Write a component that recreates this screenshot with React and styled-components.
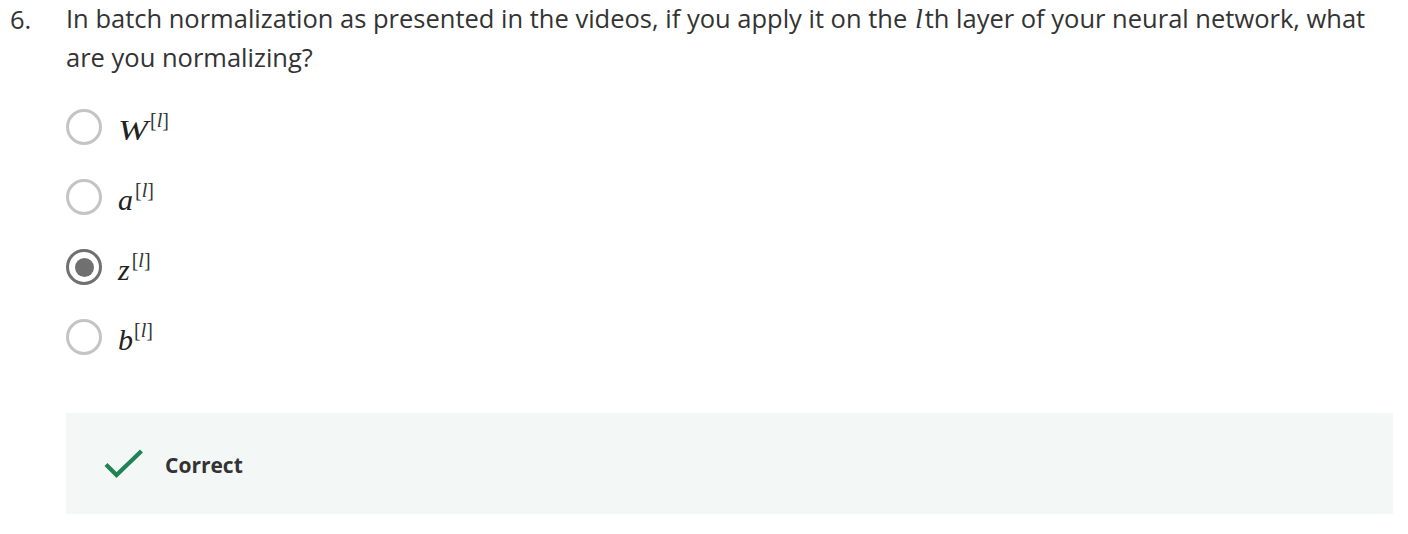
import React from "react";
import styled, { createGlobalStyle } from "styled-components";

const Global = createGlobalStyle`
  html, body { margin: 0; padding: 0; background: #fff; }
  body { font-family: "Open Sans", "Noto Sans", sans-serif; color: #333; }
`;

const Page = styled.div`
  width: 1408px;
  height: 534px;
  box-sizing: border-box;
  padding: 0 15px 0 10px;
`;

const Question = styled.div`
  display: flex;
  align-items: flex-start;
`;

const Num = styled.div`
  width: 56px;
  flex: none;
  font-size: 25.5px;
  line-height: 39px;
  color: #333;
`;

const Body = styled.div`
  flex: 1;
`;

const Prompt = styled.div`
  font-size: 25.5px;
  line-height: 39px;
  color: #333;
  margin-top: -1px;
`;

const Ell = styled.span`
  font-family: "Liberation Serif", "DejaVu Serif", serif;
  font-style: italic;
  font-size: ${(p) => p.$size || 26}px;
  margin: 0 ${(p) => p.$mr ?? 0}px 0 ${(p) => p.$ml ?? 0}px;
`;

const Options = styled.div`
  display: flex;
  flex-direction: column;
  gap: 34px;
  margin-top: 32px;
`;

const Option = styled.label`
  display: flex;
  align-items: center;
  gap: 16px;
  height: 36px;
`;

const Radio = styled.span`
  width: 36px;
  height: 36px;
  box-sizing: border-box;
  border-radius: 50%;
  border: 3.5px solid ${(p) => (p.$checked ? "#707070" : "#c4c4c4")};
  display: flex;
  align-items: center;
  justify-content: center;
  flex: none;
  &::after {
    content: "";
    display: ${(p) => (p.$checked ? "block" : "none")};
    width: 19px;
    height: 19px;
    border-radius: 50%;
    background: #707070;
  }
`;

const Expr = styled.span`
  font-family: "Liberation Serif", "DejaVu Serif", serif;
  font-size: 30px;
  color: #222;
  line-height: 1;
  white-space: nowrap;
  padding-top: 6px;
`;

const Base = styled.span`
  font-style: italic;
  display: inline-block;
  transform: ${(p) => (p.$wide ? "scaleX(1.2)" : "none")};
  transform-origin: left center;
  margin-right: ${(p) => (p.$wide ? 5 : 0)}px;
`;

const Sup = styled.sup`
  font-family: "Liberation Serif", serif;
  font-size: 20px;
  vertical-align: 13px;
  margin-left: ${(p) => p.$ml || 1}px;
  line-height: 0;
  color: #333;
`;

const Feedback = styled.div`
  margin-top: 58px;
  height: 101px;
  background: #f3f8f7;
  display: flex;
  align-items: center;
  padding-left: 38px;
  gap: 21px;
  box-sizing: border-box;
`;

const CorrectText = styled.span`
  font-weight: 700;
  font-size: 21px;
  color: #333;
  margin-top: 2px;
`;

const Check = () => (
  <svg width="40" height="32" viewBox="0 0 40 32">
    <path d="M2 16.5 L12.5 27 L37.5 3" fill="none" stroke="#1f8354" strokeWidth="4.2" />
  </svg>
);

const opts = [
  { b: "W", ml: 2, wide: true },
  { b: "a", ml: 2 },
  { b: "z", checked: true, ml: 2 },
  { b: "b", ml: 1 },
];

export default function App() {
  return (
    <Page>
      <Global />
      <Question>
        <Num>6.</Num>
        <Body>
          <Prompt>
            In batch normalization as presented in the videos, if you apply it on the <Ell $size={28} $ml={1} $mr={2}>l</Ell>th layer of your neural network, what are you normalizing?
          </Prompt>
          <Options>
            {opts.map((o) => (
              <Option key={o.b}>
                <Radio $checked={o.checked} />
                <Expr>
                  <Base $wide={o.wide}>{o.b}</Base>
                  <Sup $ml={o.ml}>
                    [<Ell $size={20}>l</Ell>]
                  </Sup>
                </Expr>
              </Option>
            ))}
          </Options>
          <Feedback>
            <Check />
            <CorrectText>Correct</CorrectText>
          </Feedback>
        </Body>
      </Question>
    </Page>
  );
}
